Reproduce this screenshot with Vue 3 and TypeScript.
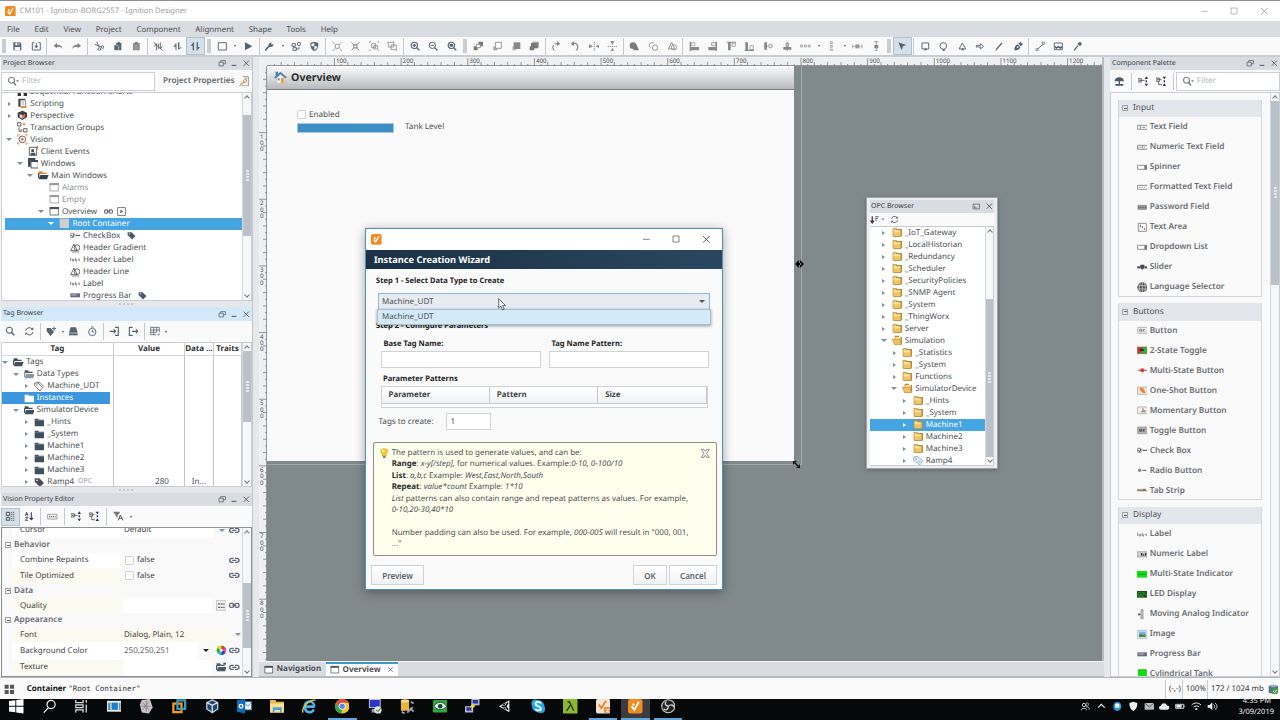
<template>
  <div class="designer">
    <!-- title bar -->
    <header class="title-bar">
      <svg class="icon" viewBox="0 0 16 16" v-html="icons.ignition" />
      <span class="title-text">CM101 - Ignition-BORG2557 - Ignition Designer</span>
      <div class="win-buttons">
        <svg v-for="b in ['wmin', 'wmax', 'wclose']" :key="b" class="icon" viewBox="0 0 16 16" v-html="icons[b]" />
      </div>
    </header>
    <nav class="menu-bar">
      <span v-for="m in menus" :key="m">{{ m }}</span>
    </nav>
    <div class="toolbar main-toolbar">
      <span v-for="(t, i) in mainTools" :key="i" :class="toolClass(t)">
        <svg v-if="isTool(t)" class="icon" viewBox="0 0 16 16" v-html="icons[toolIcon(t)]" />
      </span>
    </div>

    <main class="workspace">
      <!-- left column -->
      <aside class="left">
        <section class="panel project-panel">
          <div class="panel-head">
            <span>Project Browser</span>
            <i class="head-icons"><svg v-for="b in headIcons" :key="b" class="icon" viewBox="0 0 16 16" v-html="icons[b]" /></i>
          </div>
          <div class="filter-row">
            <div class="filter">
              <svg class="icon" viewBox="0 0 16 16" v-html="icons.filter" />
              <span>Filter</span>
            </div>
            <b class="project-props">Project Properties</b>
            <svg class="icon" viewBox="0 0 16 16" v-html="icons.props" />
          </div>
          <div class="scroll-box">
            <div class="tree project-tree">
              <div
                v-for="n in projectTree"
                :key="n.label"
                class="node"
                :class="{ selected: n.selected, muted: n.muted }"
                :style="{ paddingLeft: n.level * indent + 'px' }"
              >
                <span class="caret" :class="n.caret" />
                <svg class="icon" viewBox="0 0 16 16" v-html="icons[n.icon]" />
                <span class="label">{{ n.label }}</span>
                <svg v-for="e in n.extra" :key="e" class="icon extra" viewBox="0 0 16 16" v-html="icons[e]" />
              </div>
            </div>
            <div class="scrollbar"><i class="up" /><i class="track t1" /><i class="thumb h1" /><i class="track" /><i class="down" /></div>
          </div>
        </section>
        <div class="splitter"><i /></div>

        <section class="panel tag-panel">
          <div class="panel-head focused">
            <span>Tag Browser</span>
            <i class="head-icons"><svg v-for="b in headIcons" :key="b" class="icon" viewBox="0 0 16 16" v-html="icons[b]" /></i>
          </div>
          <div class="toolbar tag-toolbar">
            <span v-for="(t, i) in tagTools" :key="i" :class="toolClass(t)">
              <svg v-if="isTool(t)" class="icon" viewBox="0 0 16 16" v-html="icons[toolIcon(t)]" />
            </span>
          </div>
          <div class="scroll-box">
            <div class="tag-table">
              <b class="th">Tag</b><b class="th">Value</b><b class="th">Data ...</b><b class="th">Traits</b>
              <div class="tree tag-tree">
                <div
                  v-for="n in tagTree"
                  :key="n.label"
                  class="node"
                  :class="{ selected: n.selected }"
                  :style="{ paddingLeft: n.level * indent + 'px' }"
                >
                  <span class="caret" :class="n.caret" />
                  <svg class="icon" viewBox="0 0 16 16" v-html="icons[n.icon]" />
                  <span class="label">{{ n.label }}</span>
                  <small v-if="n.label === 'Ramp4'">OPC</small>
                </div>
              </div>
              <div class="td num">280</div>
              <div class="td">In...</div>
              <div class="td" />
            </div>
            <div class="scrollbar"><i class="up" /><i class="thumb h2" /><i class="track" /><i class="down" /></div>
          </div>
        </section>
        <div class="splitter"><i /></div>

        <section class="panel prop-panel">
          <div class="panel-head">
            <span>Vision Property Editor</span>
            <i class="head-icons"><svg v-for="b in headIcons" :key="b" class="icon" viewBox="0 0 16 16" v-html="icons[b]" /></i>
          </div>
          <div class="toolbar prop-toolbar">
            <span v-for="(t, i) in propTools" :key="i" :class="toolClass(t)">
              <svg v-if="isTool(t)" class="icon" viewBox="0 0 16 16" v-html="icons[toolIcon(t)]" />
            </span>
          </div>
          <div class="scroll-box prop-box">
            <div class="props">
              <template v-for="p in properties" :key="p.name">
                <div v-if="p.group" class="prop-group"><i class="minus" /><b>{{ p.name }}</b></div>
                <div v-else class="prop" :class="[p.tone, 'prop-' + p.kind]">
                  <span class="prop-name">{{ p.name }}</span>
                  <span class="prop-value"><i v-if="p.kind === 'check'" class="box" />{{ p.value }}</span>
                  <span class="prop-icons">
                    <i v-if="p.drop" class="caret open" :class="{ dark: p.kind === 'color' }" />
                    <svg v-for="e in p.extra" :key="e" class="icon" viewBox="0 0 16 16" v-html="icons[e]" />
                  </span>
                </div>
              </template>
            </div>
            <div class="scrollbar"><i class="up" /><i class="track t3" /><i class="thumb h3" /><i class="track" /><i class="down" /></div>
          </div>
        </section>
      </aside>

      <!-- design canvas -->
      <section class="center">
        <div class="rulers">
          <div class="corner" />
          <svg class="ruler-h" width="837" height="9">
            <template v-for="t in hTicks" :key="t.pos">
              <line :x1="t.pos" :x2="t.pos" :y1="t.major ? 1 : t.mid ? 5 : 7" y2="9" />
              <text v-if="t.major" :x="t.pos + 1.5" y="6">{{ t.value }}</text>
            </template>
            <line x1="0" x2="837" y1="8.5" y2="8.5" />
          </svg>
          <svg class="ruler-v" width="8" height="595">
            <template v-for="t in vTicks" :key="t.pos">
              <line :y1="t.pos" :y2="t.pos" :x1="t.major ? 0 : t.mid ? 4 : 6" x2="8" />
              <template v-if="t.major">
                <text v-for="(d, i) in String(t.value)" :key="i" x="1" :y="t.pos + 5.9 + i * 6.4">{{ d }}</text>
              </template>
            </template>
            <line x1="7.5" x2="7.5" y1="0" y2="595" />
          </svg>
          <div class="canvas">
            <div class="window-root">
              <div class="window-head">
                <svg class="icon" viewBox="0 0 16 16" v-html="icons.house" />
                <b>Overview</b>
              </div>
              <div class="window-body">
                <div class="check"><i class="box" />Enabled</div>
                <div class="tank"><i class="bar" /><span>Tank Level</span></div>
              </div>
            </div>
            <i class="guide-v" />
            <i class="guide-h" />
            <svg class="resize-h" width="9" height="8" viewBox="0 0 9 8"><path d="M0 4 4 0V8ZM9 4 5 0V8Z M3 3h3v2H3Z" /></svg>
            <svg class="resize-d" width="7" height="7" viewBox="0 0 7 7"><path d="M0 0H4L0 4ZM7 7H3L7 3ZM1 2l4 4 1-1-4-4Z" /></svg>

            <!-- OPC browser window -->
            <div class="opc">
              <div class="panel-head">
                <span>OPC Browser</span>
                <i class="head-icons"><svg class="icon" viewBox="0 0 16 16" v-html="icons.dock" /><svg class="icon" viewBox="0 0 16 16" v-html="icons.close" /></i>
              </div>
              <div class="opc-tools">
                <svg class="icon" viewBox="0 0 16 16" v-html="icons.sortdown" />
                <i class="caret open small" />
                <svg class="icon" viewBox="0 0 16 16" v-html="icons.refresh" />
              </div>
              <div class="scroll-box">
                <div class="tree opc-tree">
                  <div
                    v-for="(n, i) in opcTree"
                    :key="i"
                    class="node"
                    :class="{ selected: n.selected }"
                    :style="{ paddingLeft: n.level * indent + 'px' }"
                  >
                    <span class="caret" :class="n.caret" />
                    <svg class="icon" viewBox="0 0 16 16" v-html="icons[n.icon]" />
                    <span class="label">{{ n.label }}</span>
                  </div>
                </div>
                <div class="scrollbar"><i class="up" /><i class="track t4" /><i class="thumb" /><i class="down" /></div>
              </div>
            </div>

            <!-- instance wizard dialog -->
            <div class="dialog">
              <div class="dialog-title">
                <svg class="icon" viewBox="0 0 16 16" v-html="icons.ignition" />
                <div class="win-buttons">
                  <svg v-for="b in ['wmin', 'wmax', 'wclose']" :key="b" class="icon" viewBox="0 0 16 16" v-html="icons[b]" />
                </div>
              </div>
              <div class="dialog-head">Instance Creation Wizard</div>
              <div class="dialog-body">
                <b class="step">Step 1 - Select Data Type to Create</b>
                <div class="combo">
                  <span>Machine_UDT</span><i class="caret open" />
                  <div class="popup">Machine_UDT</div>
                </div>
                <b class="step step2">Step 2 - Configure Parameters</b>
                <div class="fields">
                  <label><b>Base Tag Name:</b><i class="input" /></label>
                  <label><b>Tag Name Pattern:</b><i class="input" /></label>
                </div>
                <b class="pp">Parameter Patterns</b>
                <div class="ptable"><b>Parameter</b><b>Pattern</b><b>Size</b></div>
                <div class="count"><span>Tags to create:</span><i class="input">1</i></div>
                <div class="hint">
                  <svg class="icon" viewBox="0 0 16 16" v-html="icons.bulb" />
                  <p>
                    The pattern is used to generate values, and can be:<br>
                    <b>Range</b>: <em>x-y[/step],</em> for numerical values. Example:<em>0-10, 0-100/10</em><br>
                    <b>List</b>: <em>a,b,c</em> Example: <em>West,East,North,South</em><br>
                    <b>Repeat</b>: <em>value*count</em> Example: <em>1*10</em><br>
                    <em>List</em> patterns can also contain range and repeat patterns as values. For example,<br>
                    <em>0-10,20-30,40*10</em><br><br>
                    Number padding can also be used. For example, <em>000-005</em> will result in "000, 001,<br>
                    ..."
                  </p>
                  <svg class="icon" viewBox="0 0 16 16" v-html="icons.xbox" />
                </div>
                <div class="buttons">
                  <button class="preview">Preview</button>
                  <button class="ok">OK</button>
                  <button class="cancel">Cancel</button>
                </div>
              </div>
            </div>
            <svg class="cursor" width="9" height="13" viewBox="0 0 9 13"><path d="M.7.8V10.2l2.2-2 1.6 3.8 1.7-.7-1.6-3.7h3Z" fill="#fff" stroke="#444" stroke-width=".8" /></svg>
          </div>
        </div>
        <div class="tabs">
          <span class="tab"><svg class="icon" viewBox="0 0 16 16" v-html="icons.window" />Navigation</span>
          <span class="tab active"><svg class="icon" viewBox="0 0 16 16" v-html="icons.window" />Overview<svg class="icon x" viewBox="0 0 16 16" v-html="icons.close" /></span>
        </div>
      </section>

      <!-- component palette -->
      <aside class="right">
        <div class="panel-head">
          <span>Component Palette</span>
          <i class="head-icons"><svg v-for="b in headIcons" :key="b" class="icon" viewBox="0 0 16 16" v-html="icons[b]" /></i>
        </div>
        <div class="palette-tools">
          <span v-for="(t, i) in paletteTools" :key="i" :class="toolClass(t)">
            <svg v-if="isTool(t)" class="icon" viewBox="0 0 16 16" v-html="icons[toolIcon(t)]" />
          </span>
          <div class="filter">
            <svg class="icon" viewBox="0 0 16 16" v-html="icons.filter" />
            <span>Filter</span>
          </div>
        </div>
        <div class="scroll-box">
          <div class="palette">
            <div v-for="g in palette" :key="g.name" class="group">
              <div class="group-head"><i class="minus" />{{ g.name }}</div>
              <div v-for="[icon, label] in g.items" :key="label" class="item">
                <svg class="icon" viewBox="0 0 16 16" v-html="icons[icon]" />{{ label }}
              </div>
            </div>
          </div>
          <div class="scrollbar"><i class="up" /><i class="thumb h5" /><i class="track" /><i class="down" /></div>
        </div>
      </aside>
    </main>

    <footer class="status-bar">
      <svg class="icon" viewBox="0 0 16 16" v-html="icons.grid4" />
      <b>Container</b><code>"Root Container"</code>
      <div class="status-right">
        <span>(-,-)</span><span>100%</span><span>172 / 1024 mb</span>
        <svg class="icon" viewBox="0 0 16 16" v-html="icons.dbok" />
      </div>
    </footer>

    <div class="taskbar">
      <span v-for="t in tasks" :key="t.icon" class="task" :class="{ running: t.running, active: t.active }">
        <svg class="icon" viewBox="0 0 16 16" v-html="icons[t.icon]" />
      </span>
      <div class="tray">
        <svg v-for="t in tray" :key="t" class="icon" viewBox="0 0 16 16" v-html="icons[t]" />
      </div>
      <div class="clock"><span class="time">4:35 PM</span><span>3/09/2019</span></div>
    </div>
  </div>
</template>

<script setup lang="ts">
interface TreeNode {
  level: number
  icon: string
  label: string
  caret?: 'open' | 'closed'
  selected?: boolean
  muted?: boolean
  extra?: string[]
}

interface Property {
  name: string
  group?: boolean
  kind?: string
  value?: string
  tone?: 'white' | 'cream'
  drop?: boolean
  extra?: string[]
}

const indent = 10.55

const S = 'fill="none" stroke="currentColor" stroke-width="1.4"'
const folder = (c: string) => `<path fill="${c}" d="M1 2.5h6V4h8v10H1Z"/><path stroke="#fff" stroke-opacity=".35" d="M1 5h14"/>`
const openFolder = (c: string, back: string) =>
  `<path fill="${back}" d="M1 2h5l1.5 2H13v2H1Z"/><path fill="${c}" d="M1 14 3.5 7.5H16L13.5 14Z"/><path fill="${c}" d="M0 5h2v7H0Z"/>`
const win = (c: string) =>
  `<path fill="#fff" stroke="${c}" stroke-width="1.2" d="M1.5 2.5h13v11h-13Z"/><path fill="${c}" d="M1 1.5h14v3.2H1Z"/>`
const yellowFolder = '<path fill="#b98a35" d="M1 2h6l1 1h7v11l-2 1H3l-2-1Z"/><path fill="#edc566" d="M2 3h4l1 2h6v9H3l-1-1Z"/><path fill="#fae3a0" d="M2.5 5h9v3h-9Z"/>'
const field = '<path fill="#fff" stroke="#777" stroke-width="1.2" d="M.6 5h14.8v6H.6Z"/>'

const icons: Record<string, string> = {
  ignition: '<rect width="16" height="16" rx="2.5" fill="#f08b22"/><path fill="none" stroke="#fff" stroke-width="2" d="M4 8l3 4 5-9M5 5l2 2"/>',
  ignition2: '<rect width="16" height="16" rx="2" fill="#f5e3d2"/><path fill="none" stroke="#e8822a" stroke-width="2" d="M3 6l3 4 5-8"/><path fill="#e8822a" d="M9 9h6v6H9Z"/><path fill="#fff" d="M11 11h3v1h-3zM11 13h3v1h-3z"/>',
  wmin: '<path stroke="currentColor" d="M3 8h10"/>',
  wmax: '<path fill="none" stroke="currentColor" d="M3 3h9v9H3Z"/>',
  wclose: '<path fill="none" stroke="currentColor" stroke-width="1.3" d="M3 3l10 10M13 3 3 13"/>',
  restore: `<path ${S} d="M2 6h8v7H2ZM5 6V3h9v6h-4"/>`,
  min: '<path fill="currentColor" d="M3 11h9v2H3Z"/>',
  close: '<path fill="none" stroke="currentColor" stroke-width="1.7" d="M3 3l10 10M13 3 3 13"/>',
  dock: `<path ${S} d="M2 4h12v9H2ZM5 7v4h4"/>`,
  filter: '<circle fill="none" stroke="currentColor" stroke-width="1.6" cx="6" cy="7" r="4"/><path stroke="currentColor" stroke-width="1.8" d="M9 10l3 4"/><path fill="currentColor" d="M12 7h4l-2 2.5Z"/>',
  props: '<path fill="none" stroke="#8a8a8a" stroke-width="1.4" d="M6 1h8v14H6v-2M9 4h3"/><path fill="none" stroke="#e28a50" stroke-width="1.8" d="M1 15 8 8"/><circle cx="9" cy="7.5" r="2.3" fill="none" stroke="#e28a50" stroke-width="1.5"/>',
  save: '<path fill="currentColor" d="M2 2h10l2 2v10H2Z"/><path fill="#fafafb" d="M5 2.5h6v4H5ZM4 9h8v4.5H4Z"/><path fill="currentColor" d="M8 3h2v3H8z"/>',
  download: `<path ${S} d="M5 2.5H2v11h12v-11h-3M8 3v7"/><path fill="currentColor" d="M5 7h6l-3 4Z"/>`,
  undo: '<path fill="#767b80" d="M1 7l5-4v2.5c5 0 8 2 8 6-2-3-4-3-8-3V11Z"/>',
  redo: '<path fill="#767b80" d="M15 7l-5-4v2.5c-5 0-8 2-8 6 2-3 4-3 8-3V11Z"/>',
  cut: `<path ${S} d="M4 1l4 8M1 5l10 4"/><circle ${S} cx="8" cy="12" r="2"/><circle ${S} cx="13" cy="9" r="2"/>`,
  copy: '<path fill="currentColor" d="M6 3h2l1-2h2l1 2h2v11H8L6 8Z"/><path fill="currentColor" stroke="#fafafb" stroke-width=".8" d="M3 6h5l2 2v6H3Z"/>',
  paste: '<path fill="#8b8b8b" d="M3 3h10v11H3Z"/><path fill="#777" d="M6 1.5h4V4H6Z"/><path stroke="#aaa" d="M5 7h6M5 9.5h6M5 12h6"/>',
  nocomm: `<path ${S} d="M5 14V4L2 8M11 2v10l3-4M8 4v8M1 2l13 12"/>`,
  comm1: `<path stroke="currentColor" stroke-width="2" d="M10 2v10"/><path ${S} d="M6 14V4L3 8h3M10 13l4-4"/>`,
  comm2: '<path fill="currentColor" d="M1 7l5-6v13H4V7ZM15 9l-5 6V2h2v7Z"/>',
  newwin: `<path ${S} d="M2 2.5h12v11H2Z"/>`,
  play: '<path fill="currentColor" d="M3 2l11 6-11 6Z"/>',
  wrench: '<path stroke="currentColor" stroke-width="2.4" d="M0 14l7-7"/><path fill="currentColor" d="M6 4l4-3-1 3 1.5 1.5L13 4l-1 4-4 1-3-2Z"/>',
  gateway: `<path ${S} d="M1.5 4h5v4h-5zM3 10h5v4H3z"/><path ${S} d="M8 12h4V9"/><circle ${S} cx="12" cy="4.5" r="2.5"/>`,
  shield: '<path fill="currentColor" d="M8 1l6 2c0 6-1 10-6 12C3 13 2 9 2 3Z"/><path fill="#fff" d="M8 3v5H4L3.5 4.5ZM8 8h4.3C12 10.5 10.5 12.5 8 13.5Z"/>',
  grp1: '<path fill="none" stroke="#888" stroke-width="1.2" d="M5 5h6v6H5ZM1 1l3 3M15 1l-3 3M1 15l3-3M15 15l-3-3"/>',
  grp2: '<path fill="none" stroke="#888" stroke-width="1.4" d="M2 2l5 5M14 2 9 7M2 14l5-5M14 14 9 9M5.5 5.5h5v5h-5Z"/>',
  grp3: '<path fill="none" stroke="#888" stroke-width="1.2" d="M4 4h6v6H4ZM7 7h6v5H7ZM1 1h2M1 1v2M15 1h-2M15 1v2M1 15h2M1 15v-2M15 15h-2M15 15v-2"/>',
  grp4: '<path fill="none" stroke="#888" stroke-width="1.2" d="M2 2h8v7H2ZM6 6h8v7H6ZM0 2h2M10 0v2M14 13v3"/>',
  zoomin: '<circle fill="none" stroke="currentColor" stroke-width="1.7" cx="6.5" cy="6.5" r="4.7"/><path stroke="currentColor" stroke-width="2" d="M10 10l4 4M4 6.5h5M6.5 4v5"/>',
  zoomout: '<circle fill="none" stroke="currentColor" stroke-width="1.5" cx="6.5" cy="6.5" r="4.7"/><path stroke="currentColor" stroke-width="2" d="M10 10l4 4"/><path stroke="currentColor" stroke-width="1.5" d="M4 6.5h5"/>',
  zoomfit: '<circle fill="none" stroke="currentColor" stroke-width="1.7" cx="6.5" cy="6.5" r="4.7"/><path stroke="currentColor" stroke-width="2" d="M10 10l4 4"/><path fill="currentColor" d="M4 4.5h5v4H4Z"/>',
  z1: '<path fill="#777" d="M8 1h7v7H8ZM1 8h6v6H1Z"/><path fill="#fafafb" stroke="#888" stroke-width="1.3" d="M5 5h6v5H5Z"/>',
  z2: '<path fill="#aaa" d="M2 8h6v6H2Z"/><path fill="#fff" stroke="#888" stroke-width="1.3" d="M5 2h9v9H5Z"/>',
  z3: '<path fill="#bbb" d="M2 8h6v6H2Z"/><path fill="#888" d="M4 2h10v10H4Z"/>',
  z4: '<path fill="#aaa" d="M5 1h10v9H5Z"/><path fill="#777" d="M3 3h10v8H3ZM1 8h7v6H1Z"/>',
  rotr: '<path fill="none" stroke="#888" stroke-width="1.7" stroke-dasharray="9 2" d="M5 14C1 10 3 3 9 4h2"/><path fill="#888" d="M9 0l5 4-5 4Z"/>',
  rotl: '<path fill="none" stroke="#888" stroke-width="1.7" d="M4 4c8-2 10 6 5 10"/><path fill="#888" d="M6 0 1 4l5 4Z"/>',
  fliph: '<path stroke="#888" stroke-width="1.4" stroke-dasharray="2 1" d="M8 1v14"/><path fill="#888" d="M0 5l6 3-6 3ZM16 5l-6 3 6 3Z"/>',
  flipv: '<path stroke="#888" stroke-width="1.4" stroke-dasharray="2 1" d="M1 8h14"/><path fill="#888" d="M5 0h6L8 6ZM5 16h6l-3-6Z"/>',
  union: '<circle cx="6" cy="7" r="5" fill="#7b7b7b"/><path fill="#7b7b7b" d="M6 14h9L11 5Z"/>',
  diff: '<path fill="none" stroke="#888" stroke-width="1.4" d="M8 3a4 4 0 1 0-4 7"/><circle cx="10.5" cy="10" r="4" fill="none" stroke="#888" stroke-width="1.3"/>',
  inter: '<circle cx="10.5" cy="9.5" r="4" fill="none" stroke="#888" stroke-width="1.2"/><path fill="none" stroke="#888" stroke-width="1.4" d="M2 12 7 2l5 10Z"/>',
  al1: '<path fill="#888" d="M1 1h2v14H1ZM3 9h12v5H3Z"/><path fill="none" stroke="#aaa" stroke-width="1.3" d="M4 2.5h5V7H4Z"/>',
  al2: '<path fill="#888" d="M13 1h2v14h-2ZM2 9h11v5H2Z"/><path fill="none" stroke="#999" stroke-width="1.3" d="M7 2.5h6V7H7Z"/>',
  al3: '<path fill="#888" d="M1 1h14v1.5H1ZM3 2h4v12H3Z"/><path fill="none" stroke="#999" stroke-width="1.3" d="M9 3h5v5H9Z"/>',
  al4: '<path fill="#888" d="M1 13h14v2H1ZM2 2h4v11H2Z"/><path fill="none" stroke="#999" stroke-width="1.3" d="M9 7h5v6H9Z"/>',
  al5: '<path fill="#888" d="M2 2h4v11H2ZM1 7h14v1.3H1Z"/><path fill="#fff" stroke="#999" stroke-width="1.3" d="M9 5h4v5H9Z"/>',
  al6: '<path fill="#888" d="M2 9h12v4H2ZM7.3 1h1.3v14H7.3Z"/><path fill="#bbb" stroke="#999" stroke-width="1.3" d="M6 3h4v5H6Z"/>',
  disth: '<path fill="none" stroke="#999" stroke-width="1.2" d="M.6 6h3v3h-3zM6.5 6h3v3h-3zM12.4 6h3v3h-3z"/>',
  distv: '<path fill="none" stroke="#999" stroke-width="1.2" d="M6.5 1h3v3h-3zM6.5 6.5h3v3h-3zM6.5 12h3v3h-3z"/>',
  sizeh: '<path stroke="#999" stroke-width="1.2" d="M1 5v6M15 5v6M1 8h14"/><path fill="#999" d="M5 5h6v6H5Z"/>',
  sizev: '<path stroke="#888" stroke-width="1.2" d="M5 1h6M5 15h6M8 1v14"/><path fill="#888" d="M5 6h6v5H5Z"/>',
  arrow: '<path fill="currentColor" d="M2 2l12 4-5 2-2 6Z"/>',
  srect: `<path ${S} d="M3 3h10v9H3Z"/><path fill="currentColor" d="M7 11h3v3H7z"/>`,
  scirc: `<circle ${S} cx="8" cy="7.5" r="5"/><path fill="currentColor" d="M7 12h3v3H7z"/>`,
  stri: `<path ${S} d="M8 3l5 9H3Z"/><path fill="currentColor" d="M7 11h3v3H7z"/>`,
  sarrow: `<path ${S} d="M2 7h6V4l5 4-5 4V9H2Z"/>`,
  spencil: '<path stroke="currentColor" stroke-width="2" d="M3 13 12 3"/><path stroke="currentColor" d="M2 15l2-1"/>',
  spen: '<path fill="currentColor" d="M2 14c0-5 2-8 5-9l4 4c-1 4-4 5-9 5ZM8 4l3-3 4 4-3 3Z"/><circle cx="7" cy="9" r="1.3" fill="#fff"/>',
  line: '<path stroke="currentColor" stroke-width="1.3" d="M3 13 13 4"/><path fill="#fff" stroke="currentColor" d="M1.5 11.5h3v3h-3zM11 2h3v3h-3z"/>',
  grad: `<path ${S} d="M2 3h12v10H2Z"/><path fill="currentColor" d="M3 7l2 2 3-2 3 2 3-2v3l-3 2-3-2-3 2-2-2Z"/>`,
  dropper: '<path stroke="currentColor" stroke-width="2" d="M3 14 9 7"/><path fill="currentColor" d="M8 4l4 4 3-4-3-3Z"/>',
  search: '<circle fill="none" stroke="currentColor" stroke-width="1.6" cx="6.5" cy="6.5" r="4.5"/><path stroke="currentColor" stroke-width="2" d="M10 10l4 4"/>',
  refresh: '<path fill="none" stroke="currentColor" stroke-width="1.5" d="M2.5 7a5.5 5.5 0 0 1 10-2M13.5 9a5.5 5.5 0 0 1-10 2"/><path fill="currentColor" d="M14 2v4h-4ZM2 14v-4h4Z"/>',
  newtag: '<path fill="currentColor" d="M1 3h6l5 6-5 6-6-7Z"/><path stroke="currentColor" stroke-width="1.5" d="M12 1v6M9 4h6"/>',
  archive: '<path fill="currentColor" d="M4 2h8l2.5 8h-13Z"/><path fill="currentColor" d="M1.5 11h13v3h-13Z"/>',
  timer: `<circle ${S} cx="8" cy="9" r="5.5"/><path ${S} d="M6 1.5h4M8 6v3h3"/>`,
  import: '<path fill="none" stroke="currentColor" stroke-width="1.7" d="M9 2h5v12H9M1 8h8M7 5l3 3-3 3"/>',
  export: '<path fill="none" stroke="currentColor" stroke-width="1.7" d="M7 2H2v12h5M6 8h8M12 5l3 3-3 3"/>',
  table: '<path fill="none" stroke="currentColor" stroke-width="1.2" d="M1 2h13v7M1 2v11h8M1 6h13M1 9.5h9M5.5 2v11M10 2v8M11 12l2 2 3-4"/>',
  cats: '<path fill="none" stroke="#555" stroke-width="1.5" d="M2 2h5v5H2zM2 10h5v4H2z"/><path stroke="#555" stroke-width="1.3" stroke-dasharray="2 1" d="M9 2h6M9 5h6M9 8h6M9 11h6M9 14h6"/>',
  sortaz: '<path fill="none" stroke="#444" stroke-width="1.4" d="M2 7l2-5 2 5M2.5 5.5h3M2 9.5h4L2 14h4"/><path fill="none" stroke="#2c3a6a" stroke-width="1.6" d="M11 2v11M8.5 10.5 11 13l2.5-2.5"/>',
  desc: '<path fill="none" stroke="#888" stroke-width="1.2" d="M1 5h14v7H1Z"/><path stroke="#777" stroke-dasharray="2 1" stroke-width="2" d="M3 8.5h10"/>',
  expand: '<path fill="none" stroke="#555" stroke-width="1.3" d="M0 4h5v5H0ZM1.5 6.5H10"/><path fill="#25285e" d="M10 4.5l2.5-4 2.5 4ZM10 11.5l2.5 4 2.5-4ZM11.5 6.5h2v3h-2z"/>',
  collapse: '<path fill="none" stroke="#555" stroke-width="1.3" d="M0 3h5v5H0ZM1.5 5.5H8M4 8v5h5"/><path fill="#25285e" d="M10 1l2.5 4L15 1ZM10 15l2.5-4 2.5 4ZM11.5 6.5h2v3h-2z"/>',
  filterA: '<path fill="#777" d="M0 1h10v2L7 6v4L4 8V6Z"/><path fill="none" stroke="#555" stroke-width="1.5" d="M8 14l3-8 4 8M9 11h5"/>',
  sfc: '<path fill="#333" d="M2 1h4v4H2ZM10 1h4v4h-4ZM1 9h5v6H1ZM10 9h5v6h-5Z"/>',
  script: '<path fill="#3d4247" d="M2 1h10v3H5v9H2Z"/><path fill="#fff" stroke="#555" d="M5 3h8v10H5Z"/><path fill="#d98f3e" d="M6 12h8v3H6Z"/><path stroke="#777" d="M7 6h4M7 9h4"/>',
  persp: '<path fill="#3e3e3e" d="M8 1l7 3v7l-7 4-7-4V4Z"/><path fill="#e07c3c" d="M8 8l4-2v5l-4 2Z"/><path fill="#ddd" d="M4 6l4 2v5l-4-2Z"/>',
  tx: '<path fill="none" stroke="#555" stroke-width="1.4" d="M1 1h5v5H1ZM10 10h5v5h-5ZM3 8v6h4"/><path fill="#e8873b" d="M9 2h3v3H9zM5 11h3v3H5z"/>',
  vision: '<circle cx="8" cy="8" r="5" fill="none" stroke="#555" stroke-width="1.4"/><circle cx="8" cy="8" r="2" fill="#e07030"/><path fill="none" stroke="#e8873b" stroke-width="1.3" d="M1 4V1h3M12 1h3v3M15 12v3h-3M4 15H1v-3"/>',
  client: '<path fill="none" stroke="#555" stroke-width="1.4" d="M2 2h11v12H2Z"/><path fill="#3e5061" d="M5 5h4v4H5ZM4 10h7v4H4Z"/><path fill="#e07030" d="M13 0h2v5h-2z"/>',
  windows: '<path fill="#3f4a54" d="M0 0h11v3H4v10H0Z"/><path fill="#fff" stroke="#3f4a54" stroke-width="1.4" d="M4.5 4h11v11h-11Z"/><path fill="#3f4a54" d="M4 3h12v3H4Z"/>',
  mainfolder: openFolder('#37424c', '#e0843c'),
  winmuted: win('#9a9a9a'),
  window: win('#4b545c'),
  link: '<path fill="none" stroke="currentColor" stroke-width="2" d="M7 5H4a3 3 0 0 0 0 6h3M9 5h3a3 3 0 0 1 0 6H9M5 8h6"/>',
  linkbtn: '<rect x="1" y="5" width="6" height="6" rx="2" fill="none" stroke="#667" stroke-width="2"/><rect x="9" y="5" width="6" height="6" rx="2" fill="none" stroke="#667" stroke-width="2"/><path stroke="#667" stroke-width="2" d="M5 8h6"/>',
  playbox: '<path fill="none" stroke="#555" stroke-width="1.3" d="M1 1h14v14H1Z"/><path fill="#555" d="M6 5l5 3-5 3Z"/>',
  container: '<path fill="#d0cfcc" d="M1 1h14v14H1Z"/>',
  checkbox: '<path fill="none" stroke="#777" stroke-width="1.2" d="M1 5h5v6H1Z"/><path fill="none" stroke="#444" stroke-width="1.5" d="M2 8l2 2 2-4M8 8h7"/>',
  shapes: '<path fill="none" stroke="#555" stroke-width="1.3" d="M1 13 6 3l5 10Z"/><circle cx="10.5" cy="8.5" r="4.3" fill="none" stroke="#555" stroke-width="1.3"/><path stroke="#555" d="M3 15h11"/>',
  label: '<path fill="none" stroke="#666" stroke-width="1.1" d="M1 5.5v5M3.5 8h2v2.5h-2ZM8 5.5v5h2V8M12 8h2v2.5M15.5 5.5v5"/>',
  progress: '<path fill="#6c6a80" d="M.5 5h15v6H.5Z"/><path fill="#a9a7bd" d="M2 6.5h8v2H2Z"/>',
  tag: '<path fill="currentColor" d="M1 2h7l7 7-6 6-8-8Z"/><circle cx="4.5" cy="5" r="1.2" fill="#fff"/>',
  tagoutline: '<path fill="none" stroke="#555" stroke-width="1.2" d="M1 3h5l7 7-4 5-8-8ZM4 1.5l5 1 6 6"/><circle cx="4.5" cy="6" r="1" fill="#555"/>',
  bluetag: '<path fill="#e4edf8" stroke="#88a3c8" stroke-width="1.2" d="M1 3l6-1 8 7-5 6-9-7Z"/><circle cx="5" cy="6" r="1.2" fill="#6f8db8"/><path stroke="#88a3c8" d="M7 9l3 3M8.5 7.5l3 3"/>',
  folder: folder('#3f4f5e'),
  folderwhite: folder('#ffffff'),
  folderopen: openFolder('#3f4f5e', '#3f4f5e'),
  foldertype: openFolder('#8a949d', '#4a5a68'),
  opc: yellowFolder,
  opcopen: '<path fill="#b98a35" d="M4 1h6l1 2h4v10H4Z"/><path fill="#fae3a0" d="M5 3h8v8H5Z"/><path fill="#edc566" stroke="#b98a35" d="M.5 6.5h11l3 8H4Z"/>',
  sortdown: '<path fill="none" stroke="#333" stroke-width="2.2" d="M4 2v11M1 10l3 4 3-4"/><path stroke="#777" stroke-width="2" d="M9 3h7M9 6h5M9 9h3"/>',
  house: '<path fill="#4f7fb2" d="M0 8 8 1l8 7-2 1L8 4 2 9.5Z"/><path fill="#f3f3f3" stroke="#bbb" stroke-width=".6" d="M3 9l5-4 5 4v6H3Z"/><path fill="#e9a02b" d="M8.5 8.5H12V15H8.5Z"/><path fill="#4f7fb2" d="M2 1h3v4L2 7Z"/><path fill="#68a" d="M4.5 9h2.5v2.5H4.5z"/>',
  bulb: '<path fill="#f6c832" stroke="#c9971c" stroke-width=".8" d="M8 1c7 0 6 6 3 8l-.5 3h-5L5 9C2 7 1 1 8 1Z"/><path fill="#888" d="M6 12h4v3H6Z"/><path fill="#fff3b0" d="M5 3h3v3H5Z"/>',
  xbox: '<path fill="#fff" stroke="#666" stroke-width="1.1" d="M2 2h4l2 3 2-3h4l-4 6 4 6h-4l-2-3-2 3H2l4-6Z"/>',
  binding: '<path fill="#eee" stroke="#aaa" stroke-width="1" d="M.5.5h15v15H.5Z"/><path stroke="#444" stroke-width="1.5" stroke-dasharray="3 1" d="M3 6h10M3 11h10"/>',
  wheel: '<circle cx="8" cy="8" r="7" fill="#3a3"/><path fill="#e33" d="M8 8V1a7 7 0 0 1 6 3.5Z"/><path fill="#e3c" d="M8 8l6-3.5a7 7 0 0 1 0 7Z"/><path fill="#33d" d="M8 8l6 3.5A7 7 0 0 1 8 15Z"/><path fill="#2cc" d="M8 8v7a7 7 0 0 1-6-3.5Z"/><path fill="#ed2" d="M8 8 2 4.5A7 7 0 0 1 8 1Z"/><circle cx="8" cy="8" r="2" fill="#fff"/>',
  browse: openFolder('#4a5a68', '#4a5a68') + '<path fill="#4a5a68" d="M11 1h4v3h-4z"/>',
  grid4: '<path fill="#555" d="M1 1h6v6H1ZM9 1h6v6H9ZM1 9h6v6H1ZM9 9h6v6H9Z"/>',
  dbok: '<path fill="#5b7390" d="M1 3l7-2 7 2v10l-7 2-7-2Z"/><path fill="#9db2c7" d="M1 3l7-2 7 2-7 2Z"/><circle cx="10.5" cy="11" r="4.5" fill="#3fa53a"/><path fill="none" stroke="#fff" stroke-width="1.5" d="M8 11l2 2 3-4"/>',
  // palette
  umbrella: '<path fill="currentColor" d="M1 8c0-8 14-8 14 0ZM7 8h2v4H7ZM2 12h12v2.5H2Z"/>',
  ptext: field + '<path stroke="#555" stroke-width="1.2" d="M5 6v4M8 8h4"/>',
  pnum: field + '<path stroke="#777" stroke-width="1.1" d="M3 6.5v3M6 6.5v3M11 6.5v3M8.5 5v6"/>',
  pspin: field + '<path fill="#777" d="M11 5h4v6h-4Z"/>',
  pfmt: field + '<path stroke="#999" stroke-width="1.5" stroke-dasharray="2 1.5" d="M3 8h10"/>',
  ppass: '<path fill="#999" stroke="#777" d="M1.5 5h13v6h-13Z"/><path stroke="#666" stroke-dasharray="1.5 1" stroke-width="2" d="M2 8h12"/>',
  parea: '<path fill="#fff" stroke="#777" stroke-width="1.2" d="M2 2h12v12H2Z"/><path stroke="#555" stroke-width="1.3" d="M5 4v4M8 6v3M11 9v3"/>',
  pslider: '<path fill="#99a" d="M0 6h16v4H0Z"/><path fill="#445" d="M5 4h6v4l-3 4-3-4ZM1 7h3v2H1zM12 7h3v2h-3z"/>',
  globe: '<circle cx="8" cy="8" r="7.5" fill="#555"/><path fill="none" stroke="#ddd" d="M1 5.5h14M1 10.5h14M8 0v16M5 1.5c-2 5-2 8 0 13M11 1.5c2 5 2 8 0 13"/>',
  pbutton: '<rect x=".6" y="3.5" width="15" height="9" rx="1.5" fill="#eee" stroke="#999"/><path fill="none" stroke="#666" stroke-width="1.1" d="M4 6.5h3v3H4ZM9.5 6v4M12 6l-2 2 2 2"/>',
  p2state: '<path fill="#2ab52a" stroke="#555" stroke-width=".8" d="M.5 3h15v10H.5Z"/><path fill="#d33" d="M1 3.5h9L6 12.5H1Z"/><path fill="#333" d="M4 6h6v3H4z"/>',
  pmulti: '<path stroke="#a88" stroke-width="2" d="M1 8h14"/><circle cx="8" cy="8" r="3.2" fill="#d2403c"/>',
  poneshot: '<rect x=".6" y="3" width="15" height="11" rx="1" fill="#f5e6d8" stroke="#999"/><path fill="#e8853a" d="M4 4h5l4 8H9l-5-5Z"/>',
  pmom: '<rect x=".6" y="3" width="15" height="10" rx="1" fill="#eee" stroke="#999"/><path fill="#a88" d="M8 5h2v3h3v3H6V9h2Z"/>',
  ptoggle: '<rect x=".6" y="3" width="15" height="10" rx="1" fill="#b5b5b5" stroke="#888"/><path fill="none" stroke="#333" stroke-width="1.1" d="M4 6.5h3v3H4ZM9.5 6v4M12 6l-2 2 2 2"/>',
  pradio: '<circle cx="4" cy="8" r="2.6" fill="#888"/><path stroke="#555" stroke-width="1.5" d="M8 8h6"/>',
  ptabs: '<path fill="#c9a04a" d="M0 6h7v2H0Z"/><path fill="#777" d="M0 8h16v1.5H0ZM8 5.5h5V8H8z"/>',
  pnumlabel: '<path fill="#ccc" stroke="#999" d="M.5 4h15v8H.5Z"/><path fill="#333" d="M6 6h2v4H6zM9 8h2v2H9zM12 6h2v4h-2z"/>',
  pmsi: '<path fill="#0ce20c" d="M0 3h16v10H0Z"/><path stroke="#0a7a0a" stroke-width="1.5" stroke-dasharray="2 1" d="M2 8h12"/>',
  pled: '<path fill="#1c4a1c" d="M0 3h16v10H0Z"/><path fill="none" stroke="#2f9c2f" stroke-width="1.2" d="M2 5h3v6H2ZM7 5h3v3H7v3h3M12 5v3h2v3"/>',
  pmoving: '<path fill="#ccc" stroke="#777" d="M6 1h3v14H6Z"/><path fill="#444" d="M2 6l4 2-4 2Z"/>',
  pimage: '<path fill="#dfeaf5" stroke="#9ab" d="M1 2h14v12H1Z"/><path fill="#6fb4e4" d="M3 4h10v5H3z"/><path fill="#4e8a43" d="M3 12V9l3-2 3 2 4-1v4Z"/>',
  ptank: '<path fill="#0ce20c" stroke="#0a0" d="M2 1h12v15H2Z"/>',
  // taskbar
  tStart: '<path fill="#fff" d="M0 2.3l7-1v6.2H0ZM8 1.1l8-1.1v7.5H8ZM0 8.5h7v6.2l-7-1ZM8 8.5h8V16l-8-1.1Z"/>',
  tSearch: '<circle cx="10" cy="6" r="4.5" fill="none" stroke="#fff" stroke-width="1.3"/><path stroke="#fff" stroke-width="1.4" d="M7 9.5 2 15"/>',
  tView: '<path fill="none" stroke="#ddd" stroke-width="1.4" d="M2 1v3h8V1M2 15v-3h8v3M2 6.5h8v3H2ZM13.5 1v3M13.5 6v9"/>',
  tBlue: '<path fill="#eee" d="M0 2h16v12H0Z"/><path fill="#1b7fd0" d="M5 4h7v8H5Z"/><path fill="#69a" d="M1 4h3v8H1ZM13 4h2v8h-2z"/>',
  tPaper: '<path fill="#c9c4c6" d="M3 1l9-1 3 9-4 7-8-1L1 6Z"/><path fill="none" stroke="#8b8088" d="M4 4l7 8M11 3 4 12M3 8h10M8 2v12"/>',
  tVm: '<path fill="none" stroke="#f39a1e" stroke-width="2.5" d="M1.5 5h9v9.5h-9Z"/><path fill="none" stroke="#3f9dc0" stroke-width="2.5" d="M6 1.5h8.5V11H6Z"/>',
  tBox: '<path fill="#21416e" stroke="#b9c9df" stroke-width="1.5" d="M8 1l6 3v7l-6 4-6-4V4Z"/><path fill="none" stroke="#dbe5f2" stroke-width="1.5" d="M2 4l6 3 6-3M8 7v8"/>',
  tOutlook: '<path fill="#fff" stroke="#2a7fc7" d="M7 3h9v9H7Z"/><path fill="none" stroke="#2a7fc7" d="M8 4l4 4 4-4"/><path fill="#0f6cbd" d="M0 1l9-1v16l-9-2Z"/><circle cx="4.5" cy="8" r="2" fill="none" stroke="#fff" stroke-width="1.5"/>',
  tExplorer: '<path fill="#e8b84a" d="M0 1h6l1 2h9v12H0Z"/><path fill="#fbe08f" d="M0 5h16v10H0Z"/><path fill="#4aa0d8" d="M3 9h10v6h-2v-3H5v3H3Z"/>',
  tIe: '<path fill="none" stroke="#49b6ea" stroke-width="3" d="M14 8.5H3.5a5 5 0 0 0 9.500 3M3 8a5 5 0 0 1 10.5 0"/><path fill="none" stroke="#f2c53d" stroke-width="1.5" d="M1 15C-1 9 9 0 15 1.5"/>',
  tChrome: '<circle cx="8" cy="8" r="8" fill="#f5c72c"/><path fill="#e04a3c" d="M1 4a8 8 0 0 1 14 0H8L5 9Z"/><path fill="#38a352" d="M1 4l4 6 3 2-1 4A8 8 0 0 1 1 4Z"/><circle cx="8" cy="8" r="3.5" fill="#4a8af0" stroke="#fff"/>',
  tRdp: '<path fill="#ccd" d="M1 0h13v10H1Z"/><path fill="#2b37c8" d="M2 1h11v8H2Z"/><path fill="#99a" d="M4 11h7v4H4Z"/><circle cx="11" cy="12" r="4" fill="#e8e8e8"/><path fill="none" stroke="#4a4" stroke-width="1.3" d="M9 12l2 2 3-4"/>',
  tSql: '<path fill="#e8b53d" d="M1 1h9v12H1Z"/><ellipse cx="5.5" cy="2" rx="4.5" ry="1.7" fill="#f8dc8c"/><path fill="none" stroke="#9ab" stroke-width="2" d="M8 15l6-6M12 3l3 2M11 10l4 4M2 14l3 2"/>',
  tEye: '<rect y="1" width="16" height="14" rx="1.5" fill="#2fa83a"/><path fill="#e9f5e4" stroke="#143" d="M1 8c4-6 10-6 14 0-4 5-10 5-14 0Z"/><circle cx="8" cy="8" r="2.5" fill="#143"/>',
  tPutty: '<path fill="#b9bcc9" d="M7 0h9v7H7ZM0 8h9v7H0Z"/><path fill="#2a2fb0" d="M8.5 1h6v4h-6ZM1.5 9h6v4h-6Z"/><path fill="#f2e13a" d="M9 4 5 9h3l-2 4 6-6H9Z"/>',
  tUnity: '<path fill="#eee" d="M1 8 12.500 1.500v13Z"/><path stroke="#07080a" stroke-width="1.6" d="M4 8h4.5M8.500 8 11 4M8.500 8l2.500 4"/><path fill="#07080a" d="M4.500 6.500h3l1.500-2.500ZM4.500 9.500h3l1.500 2.500Z"/>',
  tSkype: '<circle cx="8" cy="8" r="6.8" fill="#28a8e8"/><circle cx="5" cy="5" r="4.5" fill="#28a8e8"/><circle cx="11" cy="11" r="4.5" fill="#28a8e8"/><path fill="none" stroke="#fff" stroke-width="2" d="M11 5C9 2 5 3 5 5.5S11 8 11 10.5 6 13.5 5 11"/>',
  tLambda: '<path fill="#8ab92d" d="M0 0h16v16H0Z"/><path fill="none" stroke="#243010" stroke-width="1.5" d="M5 3h2l5 10M8 7l-4 6"/>',
  tObs: '<circle cx="8" cy="8" r="7.2" fill="#222" stroke="#ccc" stroke-width="1.2"/><path fill="none" stroke="#ccc" stroke-width="1.5" d="M8 8c-4-1-4-4-2-5M8 8c3-3 6-1 6 1M8 8c0 4-3 5-5 3"/>',
  yPeople: '<path fill="none" stroke="#ddd" stroke-width="1.3" d="M2 14c0-4 8-4 8 0M9 9c3-1 5 1 5 4"/><circle cx="6" cy="6" r="2.5" fill="none" stroke="#ddd" stroke-width="1.3"/><circle cx="11" cy="5" r="2" fill="none" stroke="#ddd"/>',
  yUp: '<path fill="none" stroke="#eee" stroke-width="1.6" d="M3 10l5-5 5 5"/>',
  yDrop: '<path fill="#2a9ae0" d="M8 1c8 0 8 14 0 14S0 1 8 1Z"/><path fill="#fff" d="M5 4h6v6H5z"/>',
  yShield: '<path fill="#eee" d="M8 1l6 2c0 6-2 10-6 12C4 13 2 9 2 3Z"/>',
  yMail: '<path fill="#bbb" d="M1 3h14v10H1Z"/><path fill="none" stroke="#222" d="M1 3l7 6 7-6"/>',
  yCloud: '<path fill="#e9e9e9" d="M3 13a3 3 0 0 1 0-6c1-5 8-5 9 0a3 3 0 0 1 1 6Z"/>',
  yBattery: '<path fill="none" stroke="#eee" stroke-width="1.3" d="M1 5h12v6H1ZM14 7v2"/><path fill="#eee" d="M2 6h8v4H2z"/>',
  yWifi: '<path fill="none" stroke="#eee" stroke-width="1.5" d="M1 6c4-4 10-4 14 0M4 9c2-2 6-2 8 0"/><circle cx="8" cy="12" r="1.6" fill="#eee"/>',
  ySound: '<path fill="#eee" d="M1 6h3l4-4v12l-4-4H1Z"/><path fill="none" stroke="#eee" stroke-width="1.3" d="M10 5c2 2 2 4 0 6M12 3c4 3 4 7 0 10"/>',
}

const menus = ['File', 'Edit', 'View', 'Project', 'Component', 'Alignment', 'Shape', 'Tools', 'Help']
const headIcons = ['restore', 'min', 'close']

// '|' separator, ':' grip, 'v' dropdown caret, 'w' tight caret, leading '*' marks the pressed button
const mainTools = (
  ': save download | undo redo | cut copy paste | nocomm comm1 *comm2 : newwin v play | wrench v gateway shield | ' +
  'grp1 grp2 grp3 grp4 | zoomin zoomout zoomfit : z1 z2 z3 z4 | rotr rotl fliph flipv | union diff inter | ' +
  'al1 al2 al3 al4 al5 al6 disth v distv v sizeh sizev : *arrow | srect scirc stri sarrow spencil spen | line grad dropper'
).split(' ')
const tagTools = 'search refresh | newtag w archive timer | import export | table w'.split(' ')
const propTools = '*cats sortaz | desc | expand collapse | filterA v'.split(' ')
const paletteTools = 'umbrella | expand collapse |'.split(' ')

const isTool = (t: string) => t.length > 1
const toolIcon = (t: string) => t.replace('*', '')

function toolClass(t: string): string {
  switch (t) {
    case '|':
      return 'sep'
    case ':':
      return 'grip'
    case 'v':
      return 'drop'
    case 'w':
      return 'drop tight'
    default:
      return t.startsWith('*') ? 'tool pressed' : 'tool'
  }
}

const projectTree: TreeNode[] = [
  { level: 0, icon: 'sfc', label: 'Sequential Function Charts' },
  { level: 0, icon: 'script', label: 'Scripting', caret: 'closed' },
  { level: 0, icon: 'persp', label: 'Perspective', caret: 'closed' },
  { level: 0, icon: 'tx', label: 'Transaction Groups' },
  { level: 0, icon: 'vision', label: 'Vision', caret: 'open' },
  { level: 1, icon: 'client', label: 'Client Events' },
  { level: 1, icon: 'windows', label: 'Windows', caret: 'open' },
  { level: 2, icon: 'mainfolder', label: 'Main Windows', caret: 'open' },
  { level: 3, icon: 'winmuted', label: 'Alarms', muted: true },
  { level: 3, icon: 'winmuted', label: 'Empty', muted: true },
  { level: 3, icon: 'window', label: 'Overview', caret: 'open', extra: ['linkbtn', 'playbox'] },
  { level: 4, icon: 'container', label: 'Root Container', caret: 'open', selected: true },
  { level: 5, icon: 'checkbox', label: 'CheckBox', extra: ['tag'] },
  { level: 5, icon: 'shapes', label: 'Header Gradient' },
  { level: 5, icon: 'label', label: 'Header Label' },
  { level: 5, icon: 'shapes', label: 'Header Line' },
  { level: 5, icon: 'label', label: 'Label' },
  { level: 5, icon: 'progress', label: 'Progress Bar', extra: ['tag'] },
]

const tagTree: TreeNode[] = [
  { level: 0, icon: 'folderopen', label: 'Tags', caret: 'open' },
  { level: 1, icon: 'foldertype', label: 'Data Types', caret: 'open' },
  { level: 2, icon: 'tagoutline', label: 'Machine_UDT', caret: 'closed' },
  { level: 1, icon: 'folderwhite', label: 'Instances', selected: true },
  { level: 1, icon: 'folderopen', label: 'SimulatorDevice', caret: 'open' },
  { level: 2, icon: 'folder', label: '_Hints', caret: 'closed' },
  { level: 2, icon: 'folder', label: '_System', caret: 'closed' },
  { level: 2, icon: 'folder', label: 'Machine1', caret: 'closed' },
  { level: 2, icon: 'folder', label: 'Machine2', caret: 'closed' },
  { level: 2, icon: 'folder', label: 'Machine3', caret: 'closed' },
  { level: 2, icon: 'tag', label: 'Ramp4', caret: 'closed' },
]

const opcNode = (level: number, label: string): TreeNode => ({ level, label, icon: 'opc', caret: 'closed' })
const opcTree: TreeNode[] = [
  ...['_IoT_Gateway', '_LocalHistorian', '_Redundancy', '_Scheduler', '_SecurityPolicies', '_SNMP Agent', '_System', '_ThingWorx', 'Server'].map(l => opcNode(0, l)),
  { level: 0, icon: 'opcopen', label: 'Simulation', caret: 'open' },
  ...['_Statistics', '_System', 'Functions'].map(l => opcNode(1, l)),
  { level: 1, icon: 'opcopen', label: 'SimulatorDevice', caret: 'open' },
  opcNode(2, '_Hints'),
  opcNode(2, '_System'),
  { ...opcNode(2, 'Machine1'), selected: true },
  opcNode(2, 'Machine2'),
  opcNode(2, 'Machine3'),
  { level: 2, icon: 'bluetag', label: 'Ramp4', caret: 'closed' },
]

const properties: Property[] = [
  { name: 'Cursor', kind: 'combo', value: 'Default', tone: 'white', drop: true, extra: ['link'] },
  { name: 'Behavior', group: true },
  { name: 'Combine Repaints', kind: 'check', value: 'false', tone: 'white', extra: ['link'] },
  { name: 'Tile Optimized', kind: 'check', value: 'false', tone: 'cream', extra: ['link'] },
  { name: 'Data', group: true },
  { name: 'Quality', kind: 'text', tone: 'cream', extra: ['binding', 'linkbtn'] },
  { name: 'Appearance', group: true },
  { name: 'Font', kind: 'font', value: 'Dialog, Plain, 12', tone: 'cream', drop: true },
  { name: 'Background Color', kind: 'color', value: '250,250,251', tone: 'white', drop: true, extra: ['wheel', 'link'] },
  { name: 'Texture', kind: 'text', tone: 'cream', extra: ['browse', 'link'] },
]

const palette: { name: string; items: [string, string][] }[] = [
  {
    name: 'Input',
    items: [
      ['ptext', 'Text Field'], ['pnum', 'Numeric Text Field'], ['pspin', 'Spinner'],
      ['pfmt', 'Formatted Text Field'], ['ppass', 'Password Field'], ['parea', 'Text Area'],
      ['pspin', 'Dropdown List'], ['pslider', 'Slider'], ['globe', 'Language Selector'],
    ],
  },
  {
    name: 'Buttons',
    items: [
      ['pbutton', 'Button'], ['p2state', '2-State Toggle'], ['pmulti', 'Multi-State Button'],
      ['poneshot', 'One-Shot Button'], ['pmom', 'Momentary Button'], ['ptoggle', 'Toggle Button'],
      ['checkbox', 'Check Box'], ['pradio', 'Radio Button'], ['ptabs', 'Tab Strip'],
    ],
  },
  {
    name: 'Display',
    items: [
      ['label', 'Label'], ['pnumlabel', 'Numeric Label'], ['pmsi', 'Multi-State Indicator'],
      ['pled', 'LED Display'], ['pmoving', 'Moving Analog Indicator'], ['pimage', 'Image'],
      ['progress', 'Progress Bar'], ['ptank', 'Cylindrical Tank'],
    ],
  },
]

// canvas is shown at two thirds scale, one tick per 10 units
function ticks(length: number, start: number) {
  const out: { pos: number; value: number; major: boolean; mid: boolean }[] = []
  for (let v = 10; start + v * 0.6665 < length; v += 10) {
    out.push({ pos: start + v * 0.6665, value: v, major: v % 100 === 0, mid: v % 20 === 0 })
  }
  return out
}
const hTicks = ticks(837, 0.8)
const vTicks = ticks(595, 0)

const tasks: { icon: string; running?: boolean; active?: boolean }[] = [
  ...['tStart', 'tSearch', 'tView', 'tBlue', 'tPaper', 'tVm', 'tBox', 'tOutlook', 'tExplorer', 'tIe'].map(icon => ({ icon })),
  { icon: 'tChrome', running: true },
  ...['tRdp', 'tSql', 'tEye', 'tPutty', 'tUnity', 'tSkype', 'tLambda'].map(icon => ({ icon })),
  { icon: 'ignition2', running: true },
  { icon: 'ignition', running: true, active: true },
  { icon: 'tObs', running: true },
]
const tray = ['yPeople', 'yUp', 'yDrop', 'yShield', 'yMail', 'yCloud', 'yBattery', 'yWifi', 'ySound']
</script>

<style>
body {
  overflow: hidden;
}
</style>

<style scoped>
.designer {
  width: 1280px;
  height: 720px;
  display: flex;
  flex-direction: column;
  overflow: hidden;
  background: #fafafb;
  color: #4c4f52;
  font-family: "Noto Sans", sans-serif;
  font-size: 8.1px;
  line-height: 12px;
  text-rendering: geometricPrecision;
  white-space: nowrap;
}

.designer * {
  box-sizing: border-box;
}

i {
  font-style: normal;
}

.icon {
  width: 10.67px;
  height: 10.67px;
  flex-shrink: 0;
  display: block;
}

/* title, menu, toolbar */
.title-bar {
  height: 21px;
  flex-shrink: 0;
  display: flex;
  align-items: center;
  padding: 0 10px 0 5px;
  border-top: 1px solid #8f8f93;
  background: #fff;
  color: #9c9c9c;
}

.title-text {
  margin-left: 4px;
  font-size: 7.55px;
}

.win-buttons {
  margin-left: auto;
  display: flex;
  gap: 19.6px;
  color: #999;
}

.menu-bar {
  height: 16px;
  flex-shrink: 0;
  display: flex;
  align-items: center;
  gap: 14.8px;
  padding: 1px 0 0 7px;
  background: #d9dce1;
  font-size: 7.95px;
}

.toolbar {
  display: flex;
  align-items: center;
  flex-shrink: 0;
  background: #fafafb;
  color: #56646f;
}

.main-toolbar {
  height: 20px;
  border-bottom: 2px solid #c9cdd3;
}

.tool {
  width: 18.6px;
  height: 18px;
  flex-shrink: 0;
  display: flex;
  align-items: center;
  justify-content: center;
}

.pressed {
  background: #d5e0ea;
  border: 1px solid #b4c1cd;
}

.sep {
  width: 3.6px;
  height: 17px;
  flex-shrink: 0;
  background: linear-gradient(#c6c9cd, #c6c9cd) center / 1px 100% no-repeat;
}

.grip {
  width: 8px;
  height: 14px;
  flex-shrink: 0;
  padding: 0 2px;
  background: radial-gradient(#9aa0a6 0.7px, transparent 1px) center / 2px 2px;
  background-clip: content-box;
  opacity: 0.5;
}

.drop {
  width: 7.4px;
  flex-shrink: 0;
  display: flex;
  justify-content: center;
}

.drop::before {
  content: '';
  border: 1.7px solid transparent;
  border-top: 2px solid #555;
  border-bottom: 0;
}

.drop.tight {
  width: 3.4px;
}

/* panels */
.workspace {
  height: 620px;
  flex-shrink: 0;
  display: flex;
  background: #e6e8eb;
}

.left {
  width: 253px;
  display: flex;
  flex-direction: column;
  border-right: 1px solid #c3c7cc;
}

.panel {
  display: flex;
  flex-direction: column;
  background: #fafafb;
  padding-left: 1px;
}

.panel-head {
  height: 13px;
  flex-shrink: 0;
  display: flex;
  align-items: center;
  justify-content: space-between;
  padding: 0 2px;
  background: #d9dce1;
  font-size: 7px;
  color: #3c3f42;
}

.panel-head.focused {
  height: 14px;
  background: #d3e8f8;
}

.head-icons {
  display: flex;
  gap: 3.5px;
  color: #555d66;
}

.head-icons .icon {
  width: 8.5px;
  height: 8.5px;
}

.project-panel {
  height: 244px;
}

.tag-panel {
  height: 180px;
}

.prop-panel {
  flex: 1;
  min-height: 0;
}

.filter-row {
  height: 22px;
  flex-shrink: 0;
  display: flex;
  align-items: center;
  gap: 4px;
}

.filter {
  width: 154px;
  height: 19px;
  display: flex;
  align-items: center;
  padding-left: 5px;
  gap: 3px;
  background: #fff;
  border: 1px solid #ccd0d4;
  color: #7c8288;
}

.filter span {
  color: #b4b7ba;
}

.filter .icon {
  width: 12px;
  height: 12px;
}

.project-props {
  margin-left: 4px;
  font-size: 8.2px;
  font-weight: 600;
  color: #65696d;
}

.scroll-box {
  flex: 1;
  min-height: 0;
  display: flex;
  overflow: hidden;
  border: 1px solid #c9cdd2;
  background: #fff;
}

.scrollbar {
  width: 9px;
  flex-shrink: 0;
  display: flex;
  flex-direction: column;
  background: #f6f7f8;
  border-left: 1px solid #d5d8dc;
}

.scrollbar .up,
.scrollbar .down {
  height: 8px;
  display: flex;
  align-items: center;
  justify-content: center;
}

.scrollbar .up::before,
.scrollbar .down::before {
  content: '';
  width: 3px;
  height: 3px;
  border: solid #777;
  border-width: 1px 0 0 1px;
  transform: translateY(1px) rotate(45deg);
}

.scrollbar .down::before {
  transform: translateY(-1px) rotate(225deg);
}

.thumb {
  flex: 1;
  display: flex;
  align-items: center;
  justify-content: center;
  background: #bac1c8;
}

.thumb::before {
  content: '';
  width: 3px;
  height: 12px;
  background: repeating-linear-gradient(#e4e7ea 0 2px, transparent 2px 3px);
}

.track {
  flex: 1;
}

.t1 {
  flex: none;
  height: 14px;
}

.h1 {
  flex: none;
  height: 121px;
}

.h2 {
  flex: none;
  height: 71px;
}

.t3 {
  flex: none;
  height: 47px;
}

.h3 {
  flex: none;
  height: 65px;
}

.t4 {
  flex: none;
  height: 64px;
}

.h5 {
  flex: none;
  height: 184px;
}

.splitter {
  height: 6px;
  flex-shrink: 0;
  display: flex;
  align-items: center;
  justify-content: center;
}

.splitter i {
  width: 15px;
  height: 2px;
  background: repeating-linear-gradient(90deg, #c5c9cc 0 2px, transparent 2px 4px);
}

/* trees */
.tree {
  flex: 1;
  overflow: hidden;
}

.project-tree {
  margin-top: -7.5px;
  padding-left: 3px;
}

.node {
  height: 12px;
  display: flex;
  align-items: center;
}

.node .icon {
  margin-left: 4px;
}

.node .label {
  margin-left: 2.6px;
}

.node .extra {
  margin-left: 6.5px;
  width: 9px;
  height: 9px;
  color: #4a5a69;
}

.node .extra + .extra {
  margin-left: 4.5px;
}

.node.selected {
  background: #45a4e2;
  color: #fff;
}

.node.muted {
  color: #929292;
}

.node small {
  margin-left: 4px;
  font-size: 7px;
  color: #999;
}

.caret {
  width: 8px;
  flex-shrink: 0;
  display: flex;
  justify-content: center;
  color: #7d8f9f;
}

.caret.closed::before {
  content: '';
  border: 2.5px solid transparent;
  border-left: 3.5px solid currentColor;
  border-right: 0;
}

.caret.open::before {
  content: '';
  border: 3px solid transparent;
  border-top: 3.5px solid currentColor;
  border-bottom: 0;
}

.selected .caret {
  color: #fff;
}

/* tag browser */
.tag-toolbar {
  height: 21px;
  padding-left: 0.5px;
}

.tag-table {
  flex: 1;
  display: grid;
  grid-template-columns: 112px 71px 29px 1fr;
  grid-template-rows: 13px 1fr;
}

.th {
  text-align: center;
  font-size: 8px;
  line-height: 12px;
  color: #333;
  border-bottom: 1px solid #d5d8dc;
  border-right: 1px solid #ccd0d4;
  overflow: hidden;
}

.tag-tree {
  border-right: 1px solid #c2c6ca;
  padding-right: 3px;
  margin-left: -1px;
}

.tag-tree .node.selected {
  background: #3c96dd;
}

.td {
  padding-top: 120px;
  text-align: center;
  border-right: 1px solid #c2c6ca;
}

.td.num {
  text-align: right;
  padding-right: 15px;
}

/* property editor */
.prop-toolbar {
  height: 21px;
}

.prop-toolbar .sep,
.palette-tools .sep {
  width: 5px;
}

.prop-box {
  border-color: #8d9094;
}

.props {
  flex: 1;
  background: #f9f9fa;
  margin-top: -6px;
  font-size: 8px;
}

.prop-group {
  height: 14.5px;
  display: flex;
  align-items: center;
  gap: 3px;
  padding-left: 3px;
  font-size: 8.3px;
  color: #6b6f73;
}

.prop-group b {
  font-weight: 600;
}

.minus {
  width: 6px;
  height: 6px;
  flex-shrink: 0;
  border: 1px solid #a0a4a8;
  background: linear-gradient(#666, #666) center / 3px 1px no-repeat;
}

.prop {
  height: 16px;
  display: flex;
  align-items: center;
  padding-left: 10px;
  color: #3f4245;
}

.prop-check {
  height: 15.5px;
}

.prop-text {
  height: 15px;
}

.prop-font {
  height: 14.5px;
}

.prop-color {
  height: 17.5px;
}

.prop-name {
  width: 109px;
  height: 100%;
  padding-left: 8px;
  display: flex;
  align-items: center;
}

.prop-value {
  flex: 1;
  height: 100%;
  margin-left: 2px;
  padding-left: 1px;
  display: flex;
  align-items: center;
}

.prop-check .prop-value {
  padding-left: 2px;
}

.white .prop-name,
.prop-combo .prop-value,
.prop-text .prop-value,
.prop-color .prop-value {
  background: #fff;
}

.cream .prop-name,
.prop-font .prop-value {
  background: #fbfaf0;
}

.prop-color .prop-value {
  color: #666;
}

.prop-icons {
  display: flex;
  align-items: center;
  gap: 3px;
  padding: 0 2px 0 4px;
  color: #5a6674;
}

.prop-font .prop-icons {
  padding-right: 0;
}

.prop-icons .caret.dark {
  color: #222;
  margin-right: 3px;
}

.box {
  width: 9px;
  height: 9px;
  margin-right: 3px;
  border: 1px solid #cdd1d6;
  border-radius: 1px;
  background: #fff;
}

/* canvas */
.center {
  width: 852px;
  display: flex;
  flex-direction: column;
  padding-left: 6px;
}

.rulers {
  height: 603.5px;
  width: 845px;
  display: grid;
  grid-template-columns: 8px 1fr;
  grid-template-rows: 9px 1fr;
  background: #eff0f2;
  overflow: hidden;
  border-right: 2px solid #b8bcc0;
}

.rulers svg {
  display: block;
}

.rulers line {
  stroke: #7d8083;
  stroke-width: 0.8;
}

.rulers text {
  font-size: 6.2px;
  fill: #555;
}

.canvas {
  position: relative;
  background: #80898b;
}

.window-root {
  width: 527px;
  height: 395px;
  background: #fafafb;
}

.window-head {
  height: 24px;
  display: flex;
  align-items: center;
  gap: 4px;
  padding-left: 7px;
  background: linear-gradient(#fcfcfd, #b8babd);
  border-bottom: 1px solid #7c7e80;
  font-size: 10.6px;
  color: #2c2c2c;
}

.window-head .icon {
  width: 13px;
  height: 13px;
}

.window-body {
  padding: 19px 0 0 30px;
}

.check {
  height: 11px;
  display: flex;
  align-items: center;
}

.tank {
  height: 14px;
  display: flex;
  align-items: center;
}

.bar {
  width: 97px;
  height: 10px;
  margin-top: 2px;
  background: #3b8fc6;
  border: 1px solid #a8c8dc;
}

.tank span {
  margin-left: 11px;
}

.guide-v {
  position: absolute;
  left: 534px;
  top: 0;
  width: 1px;
  height: 399px;
  background: #a3a9ab;
}

.guide-h {
  position: absolute;
  left: 0;
  top: 398px;
  width: 534px;
  height: 1px;
  background: #a3a9ab;
}

.resize-h {
  position: absolute;
  left: 527.5px;
  top: 194px;
}

.resize-d {
  position: absolute;
  left: 526px;
  top: 395px;
}

/* OPC browser */
.opc {
  position: absolute;
  left: 599px;
  top: 131px;
  width: 132px;
  height: 272px;
  display: flex;
  flex-direction: column;
  padding: 2px 3px;
  background: #eceef1;
  border: 1px solid #9da4a8;
  box-shadow: 0 1px 4px rgba(0, 0, 0, 0.25);
}

.opc .panel-head {
  padding: 0 1px;
}

.opc .head-icons {
  gap: 4px;
}

.opc-tools {
  height: 12.5px;
  flex-shrink: 0;
  display: flex;
  align-items: center;
  background: #fafafb;
  color: #556;
}

.opc-tools .icon {
  width: 9px;
  height: 9px;
}

.opc-tools .small {
  transform: scale(0.6);
}

.opc-tools .small + .icon {
  margin-left: 3px;
}

.opc-tree {
  font-size: 8px;
}

.opc .scroll-box {
  border-left: 0;
}

.opc-tree .caret {
  margin-left: 9.5px;
}

.opc .scrollbar {
  width: 8px;
}

/* dialog */
.dialog {
  position: absolute;
  left: 98px;
  top: 162px;
  width: 358px;
  height: 362px;
  display: flex;
  flex-direction: column;
  background: #fafafb;
  border: 1px solid #4d8fb8;
  box-shadow: 0 2px 10px rgba(0, 0, 0, 0.35);
}

.dialog-title {
  height: 20.5px;
  flex-shrink: 0;
  display: flex;
  align-items: center;
  padding: 0 10px 0 5px;
  background: #fff;
}

.dialog-title .win-buttons {
  color: #444;
}

.dialog-head {
  height: 19px;
  flex-shrink: 0;
  padding-left: 8px;
  line-height: 19px;
  font-size: 9.25px;
  font-weight: 700;
  color: #fff;
  background: linear-gradient(90deg, #1c3145, #29475f);
}

.dialog-body {
  flex: 1;
  display: flex;
  flex-direction: column;
  padding: 6.5px 5px 4px 5px;
}

.step {
  height: 12px;
  margin-left: 5px;
  font-size: 7.55px;
  color: #222;
}

.combo {
  position: relative;
  width: 332px;
  height: 17px;
  margin: 6px 0 0 7px;
  display: flex;
  align-items: center;
  justify-content: space-between;
  padding: 0 3px;
  flex-shrink: 0;
  background: #e8ebf1;
  border: 1px solid #86bdd0;
  font-size: 8px;
}

.combo .caret {
  color: #556;
}

.popup {
  position: absolute;
  left: -2px;
  top: 15px;
  width: 334px;
  height: 16px;
  padding-left: 4px;
  line-height: 14px;
  background: #d3eafb;
  border: 1px solid #a7bfce;
  box-shadow: 0 1px 3px rgba(0, 0, 0, 0.4);
}

.step2 {
  margin-top: 10px;
}

.fields {
  display: flex;
  gap: 8px;
  margin: 5.5px 0 0 9.5px;
}

.fields label {
  width: 160px;
  display: flex;
  flex-direction: column;
  font-size: 7.6px;
  color: #222;
}

.fields b {
  padding-left: 3px;
  height: 13px;
}

.input {
  height: 17px;
  background: #fff;
  border: 1px solid #cfd2d6;
}

.pp {
  margin: 5.5px 0 0 12px;
  height: 12.5px;
  font-size: 7.6px;
  color: #222;
}

.ptable {
  width: 327px;
  height: 22px;
  flex-shrink: 0;
  margin-left: 9.5px;
  display: grid;
  grid-template-columns: repeat(3, 1fr);
  grid-template-rows: 17px;
  background: #fff;
  border: 1px solid #cfd2d6;
  font-size: 7.9px;
  color: #444;
}

.ptable b {
  padding-left: 7px;
  line-height: 16px;
  background: linear-gradient(#fff, #f0f2f6);
  border-right: 1px solid #c6cad0;
  border-bottom: 1px solid #c6cad0;
}

.count {
  display: flex;
  align-items: center;
  margin: 5.5px 0 0 7.5px;
}

.count .input {
  width: 45px;
  padding-left: 4px;
  line-height: 15px;
  margin-left: 12px;
}

.hint {
  height: 113.5px;
  margin: 12px 0 0 1.5px;
  width: 344px;
  flex-shrink: 0;
  display: flex;
  padding: 4.5px 5px;
  background: #ffffee;
  border: 1px solid #8e8e86;
  border-radius: 2px;
}

.hint p {
  flex: 1;
  margin: 0.5px 0 0 2.5px;
  line-height: 11.4px;
  font-size: 7.94px;
}

.hint b {
  color: #2a2a2a;
}

.buttons {
  display: flex;
  gap: 2px;
  margin-top: 9.5px;
}

.buttons button {
  height: 20px;
  padding: 0;
  font-family: inherit;
  font-size: 8px;
  font-weight: 600;
  color: #5f6468;
  background: linear-gradient(#fff, #f1f2f6);
  border: 1px solid #cfd2d7;
}

.preview {
  width: 53px;
  margin-right: auto;
}

.ok {
  width: 34px;
}

.cancel {
  width: 48px;
}

.cursor {
  position: absolute;
  left: 231px;
  top: 231.5px;
}

.tabs {
  flex: 1;
  display: flex;
  width: 845px;
  padding-left: 1px;
  background: #d8dbe0;
  border-top: 1px solid #f5f5f5;
  border-bottom: 1px solid #b5b8bc;
}

.tab {
  display: flex;
  align-items: center;
  gap: 3px;
  width: 66px;
  padding: 1px 0 0 4px;
  font-size: 8.1px;
  font-weight: 700;
  color: #4b4f53;
}

.tab .icon {
  width: 9.5px;
  height: 9.5px;
}

.tab.active {
  width: 72px;
  padding-top: 0;
  background: #fff;
  border-top: 2px solid #3f98cc;
}

.tab .icon.x {
  width: 7px;
  height: 7px;
  margin-left: 3px;
}

/* palette */
.right {
  flex: 1;
  display: flex;
  flex-direction: column;
  background: #fafafb;
  margin-left: 5px;
}

.palette-tools {
  height: 22px;
  display: flex;
  align-items: center;
  color: #4d5b69;
}

.palette-tools .filter {
  flex: 1;
  width: auto;
}

.palette {
  flex: 1;
  padding: 6.5px 8px 0 7px;
  background: #fafafb;
}

.group {
  border: 1px solid #d3d7dc;
  border-top: 0;
  margin-bottom: 6.5px;
  height: 197px;
}

.group:last-child {
  height: auto;
}

.group-head {
  height: 17.5px;
  display: flex;
  align-items: center;
  gap: 5px;
  padding-left: 3px;
  background: #e3e6eb;
  font-size: 8.3px;
}

.item {
  height: 20px;
  display: flex;
  align-items: center;
  gap: 2.5px;
  padding-left: 17.5px;
  font-size: 8.25px;
  font-weight: 600;
  color: #6b6e71;
}

/* status bar and taskbar */
.status-bar {
  height: 22px;
  flex-shrink: 0;
  display: flex;
  align-items: center;
  padding: 1px 0 0 4px;
  background: #fafafb;
  border-top: 1px solid #b5b8bc;
  color: #333;
  font-size: 8px;
}

.status-bar b {
  margin-left: 12px;
  color: #111;
}

.status-bar code {
  margin-left: 2px;
  font-family: "DejaVu Sans Mono", monospace;
  font-size: 7.5px;
}

.status-right {
  margin-left: auto;
  height: 100%;
  display: flex;
  align-items: center;
  font-size: 7.9px;
}

.status-right span {
  height: 19px;
  line-height: 19px;
  padding: 0 1.5px 0 2.5px;
  border-left: 1px solid #c6c9cd;
}

.status-right .icon {
  margin: 0 1px 0 3px;
}

.taskbar {
  height: 21px;
  flex-shrink: 0;
  display: flex;
  background: #07080a;
}

.task {
  width: 32.6px;
  display: flex;
  justify-content: center;
  border-bottom: 2px solid transparent;
}

.task .icon {
  width: 14.5px;
  height: 14.5px;
}

.task.running {
  border-bottom-color: #62a5d8;
  margin: 0 2px;
  width: 28.6px;
}

.task.active {
  background: #3a3c40;
}

.tray {
  margin-left: auto;
  display: flex;
  align-items: center;
  gap: 5.3px;
  height: 15px;
}

.clock {
  width: 62px;
  display: flex;
  flex-direction: column;
  align-items: flex-end;
  padding-right: 6px;
  color: #eee;
  font-size: 7.5px;
  line-height: 11.5px;
  overflow: hidden;
}

.clock .time {
  margin: -3.5px 3px 0 0;
}
</style>
